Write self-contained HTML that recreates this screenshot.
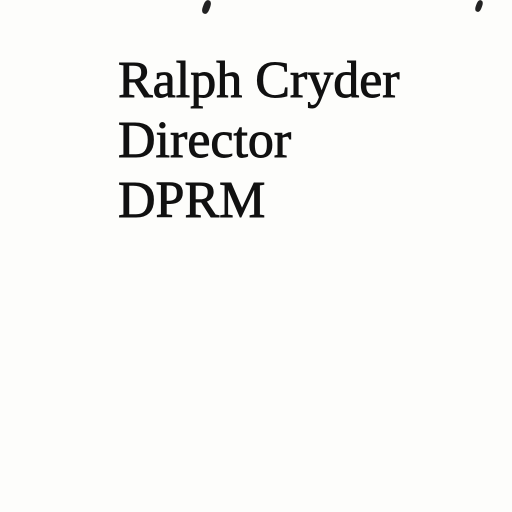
<!DOCTYPE html>
<html><head><style>
html,body{margin:0;padding:0;background:#fdfdfb;width:512px;height:512px;overflow:hidden;position:relative}
.t{position:absolute;left:118px;top:51px;font-family:"Liberation Serif",serif;font-size:52px;line-height:60px;color:#111;-webkit-text-stroke:0.9px #111}
.m{position:absolute;background:#222;border-radius:40%}
</style></head><body>
<div class="m" style="left:203px;top:0;width:7px;height:14px;transform:rotate(20deg)"></div>
<div class="m" style="left:476px;top:0;width:6px;height:12px;transform:rotate(20deg)"></div>
<div class="t">Ralph Cryder<br>Director<br>DPRM</div>
</body></html>
